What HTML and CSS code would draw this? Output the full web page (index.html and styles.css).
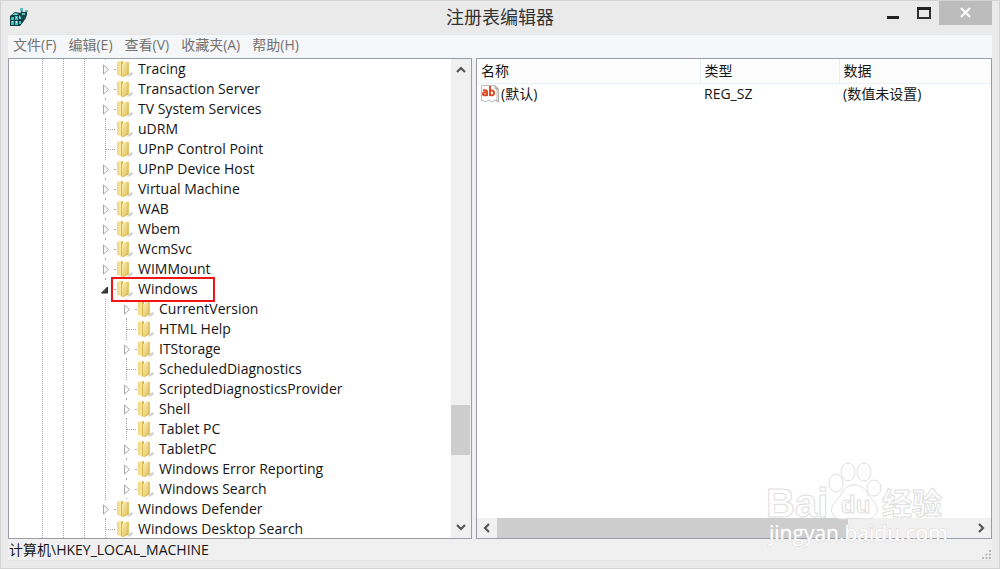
FILE: index.html
```html
<!DOCTYPE html>
<html lang="zh-CN">
<head>
<meta charset="utf-8">
<title>注册表编辑器</title>
<link rel="stylesheet" href="styles.css">
</head>
<body>
<svg class="defs" aria-hidden="true">
  <defs>
    <linearGradient id="gold" x1="0" x2="1" y1="0" y2="1"><stop offset="0" stop-color="#fbf0b8"/><stop offset="1" stop-color="#e0bb4e"/></linearGradient>
    <linearGradient id="pale" x1="0" x2="1"><stop offset="0" stop-color="#efd67e"/><stop offset="1" stop-color="#fbeaa6"/></linearGradient>
    <symbol id="folder" viewBox="0 0 18 18">
      <path d="M11 16.500l2-3 3-1.500 1 2-3 2.500z" fill="#c4c4c4" opacity=".75"/>
      <path d="M1 2l4-1v15.500l-4-2z" fill="url(#pale)"/>
      <path d="M5 1.500L7 1v5l-1 10.500H5z" fill="#d8b550"/>
      <path d="M6 4l2-.5V2l4-.5.8.8V14L7.500 17H6z" fill="url(#gold)"/>
      <path d="M12 2v12l-4.500 2.500" fill="none" stroke="#dcb953"/>
    </symbol>
    <symbol id="closed" viewBox="0 0 21 20">
      <path d="M10.500 0v1M10.500 19v1M19 10.500h2" stroke="#aaa"/>
      <path d="M8.500 6v9l5-4.500z" fill="#fff" stroke="#a6a6a6"/>
    </symbol>
    <symbol id="open" viewBox="0 0 21 20"><path d="M12.500 8v6h-6z" fill="#404040" stroke="#262626"/><path d="M10.500 0v1M19 10.500h2" stroke="#aaa"/></symbol>
    <symbol id="leaf" viewBox="0 0 21 20"><path d="M10.500 0v20M11 10.500h10" fill="none" stroke="#a0a0a0" stroke-dasharray="1 1"/></symbol>
    <symbol id="chevron" viewBox="0 0 12 12"><path d="M2 8l4-4 4 4" fill="none" stroke="#555" stroke-width="2.200"/></symbol>
  </defs>
</svg>
<div class="window">
  <header class="titlebar">
    <svg class="app-icon" viewBox="0 0 20 20" aria-hidden="true">
      <path d="M1 9l5-4 6 1 1 2 4-2-2 8-4 5H1z" fill="#123c40"/>
      <path d="M2 10h3v3H2zM6 9h3v4H6zM2 14h3v4H2zM6 14h3v4H6zM10 14h2v3h-2z" fill="#2fc6c8"/>
      <path d="M3 8l3-2 4 1-2 1zM10 9l2-1v4h-2z" fill="#59e0df"/>
      <path d="M12 4l3 1 3-1v4l-2 5-3-1-2-3z" fill="#17484c"/>
      <path d="M11 1h3v3h-3zM16 3h3v2h-3zM13 6h3v2h-3z" fill="#62b9bd"/>
      <path d="M3 14h1v1H3zM7 14h1v2H7zM7 10h1v1H7z" fill="#c8ffff"/>
    </svg>
    <h1 class="title">注册表编辑器</h1>
    <div class="controls">
      <button class="control" type="button" aria-label="最小化"><svg viewBox="0 0 16 16"><path d="M2 12.500h12" stroke="#222" stroke-width="3"/></svg></button>
      <button class="control" type="button" aria-label="最大化"><svg viewBox="0 0 16 16"><path d="M2 3h12v10H2z" fill="none" stroke="#303030" stroke-width="2"/><path d="M1 3.500h14" stroke="#222" stroke-width="3"/></svg></button>
      <button class="control close" type="button" aria-label="关闭"><svg viewBox="0 0 16 16"><path d="M3 3l9 9M12 3l-9 9" stroke="#fff" stroke-width="2"/></svg></button>
    </div>
  </header>
  <nav class="menu" aria-label="菜单">
    <button type="button">文件(F)</button><button type="button">编辑(E)</button><button type="button">查看(V)</button><button type="button">收藏夹(A)</button><button type="button">帮助(H)</button>
  </nav>
  <main class="panes">
    <section class="pane tree-pane" aria-label="注册表项">
      <ul class="tree">
        <li><div class="row"><button class="toggle" type="button" aria-label="展开 Tracing"><svg><use href="#closed"/></svg></button><svg class="folder"><use href="#folder"/></svg><span>Tracing</span></div></li>
        <li><div class="row"><button class="toggle" type="button" aria-label="展开 Transaction Server"><svg><use href="#closed"/></svg></button><svg class="folder"><use href="#folder"/></svg><span>Transaction Server</span></div></li>
        <li><div class="row"><button class="toggle" type="button" aria-label="展开 TV System Services"><svg><use href="#closed"/></svg></button><svg class="folder"><use href="#folder"/></svg><span>TV System Services</span></div></li>
        <li><div class="row"><svg class="toggle"><use href="#leaf"/></svg><svg class="folder"><use href="#folder"/></svg><span>uDRM</span></div></li>
        <li><div class="row"><svg class="toggle"><use href="#leaf"/></svg><svg class="folder"><use href="#folder"/></svg><span>UPnP Control Point</span></div></li>
        <li><div class="row"><button class="toggle" type="button" aria-label="展开 UPnP Device Host"><svg><use href="#closed"/></svg></button><svg class="folder"><use href="#folder"/></svg><span>UPnP Device Host</span></div></li>
        <li><div class="row"><button class="toggle" type="button" aria-label="展开 Virtual Machine"><svg><use href="#closed"/></svg></button><svg class="folder"><use href="#folder"/></svg><span>Virtual Machine</span></div></li>
        <li><div class="row"><button class="toggle" type="button" aria-label="展开 WAB"><svg><use href="#closed"/></svg></button><svg class="folder"><use href="#folder"/></svg><span>WAB</span></div></li>
        <li><div class="row"><button class="toggle" type="button" aria-label="展开 Wbem"><svg><use href="#closed"/></svg></button><svg class="folder"><use href="#folder"/></svg><span>Wbem</span></div></li>
        <li><div class="row"><button class="toggle" type="button" aria-label="展开 WcmSvc"><svg><use href="#closed"/></svg></button><svg class="folder"><use href="#folder"/></svg><span>WcmSvc</span></div></li>
        <li><div class="row"><button class="toggle" type="button" aria-label="展开 WIMMount"><svg><use href="#closed"/></svg></button><svg class="folder"><use href="#folder"/></svg><span>WIMMount</span></div></li>
        <li>
          <div class="row marked"><button class="toggle" type="button" aria-label="折叠 Windows" aria-expanded="true"><svg><use href="#open"/></svg></button><svg class="folder"><use href="#folder"/></svg><span>Windows</span></div>
          <ul class="branch">
            <li><div class="row"><button class="toggle" type="button" aria-label="展开 CurrentVersion"><svg><use href="#closed"/></svg></button><svg class="folder"><use href="#folder"/></svg><span>CurrentVersion</span></div></li>
            <li><div class="row"><svg class="toggle"><use href="#leaf"/></svg><svg class="folder"><use href="#folder"/></svg><span>HTML Help</span></div></li>
            <li><div class="row"><button class="toggle" type="button" aria-label="展开 ITStorage"><svg><use href="#closed"/></svg></button><svg class="folder"><use href="#folder"/></svg><span>ITStorage</span></div></li>
            <li><div class="row"><svg class="toggle"><use href="#leaf"/></svg><svg class="folder"><use href="#folder"/></svg><span>ScheduledDiagnostics</span></div></li>
            <li><div class="row"><button class="toggle" type="button" aria-label="展开 ScriptedDiagnosticsProvider"><svg><use href="#closed"/></svg></button><svg class="folder"><use href="#folder"/></svg><span>ScriptedDiagnosticsProvider</span></div></li>
            <li><div class="row"><button class="toggle" type="button" aria-label="展开 Shell"><svg><use href="#closed"/></svg></button><svg class="folder"><use href="#folder"/></svg><span>Shell</span></div></li>
            <li><div class="row"><svg class="toggle"><use href="#leaf"/></svg><svg class="folder"><use href="#folder"/></svg><span>Tablet PC</span></div></li>
            <li><div class="row"><button class="toggle" type="button" aria-label="展开 TabletPC"><svg><use href="#closed"/></svg></button><svg class="folder"><use href="#folder"/></svg><span>TabletPC</span></div></li>
            <li><div class="row"><button class="toggle" type="button" aria-label="展开 Windows Error Reporting"><svg><use href="#closed"/></svg></button><svg class="folder"><use href="#folder"/></svg><span>Windows Error Reporting</span></div></li>
            <li><div class="row"><button class="toggle" type="button" aria-label="展开 Windows Search"><svg><use href="#closed"/></svg></button><svg class="folder"><use href="#folder"/></svg><span>Windows Search</span></div></li>
          </ul>
        </li>
        <li><div class="row"><button class="toggle" type="button" aria-label="展开 Windows Defender"><svg><use href="#closed"/></svg></button><svg class="folder"><use href="#folder"/></svg><span>Windows Defender</span></div></li>
        <li><div class="row"><svg class="toggle"><use href="#leaf"/></svg><svg class="folder"><use href="#folder"/></svg><span>Windows Desktop Search</span></div></li>
      </ul>
      <div class="scroll vertical">
        <button type="button" aria-label="向上滚动"><svg><use href="#chevron"/></svg></button>
        <div class="track"><div class="thumb"></div></div>
        <button type="button" aria-label="向下滚动"><svg class="down"><use href="#chevron"/></svg></button>
      </div>
    </section>
    <section class="pane value-pane" aria-label="值">
      <table class="values">
        <thead><tr><th class="name" scope="col">名称</th><th class="type" scope="col">类型</th><th scope="col">数据</th></tr></thead>
        <tbody><tr>
          <td><div class="value-name"><svg class="string-icon" viewBox="0 0 20 20" aria-hidden="true"><path d="M1.500 1.500H15l3 3V18l-3-2-3 2-3-2-3 1.500-4.500-1z" fill="#fff" stroke="#bbb"/><path d="M15 1.500l3 3h-3zM16 5l2.500 1v12L16 16" fill="#ddd" stroke="#aaa"/><g fill="none" stroke="#df4b25" stroke-width="2"><path d="M3 6.200h2.500q1.500 0 1.500 1.500V12M7 8.500H4.500Q3 8.500 3 10t1.500 1.200H7"/><path d="M10 2v10M10 6.500h2q2 0 2 2.400T12 11.200h-2"/></g></svg><span>(默认)</span></div></td>
          <td>REG_SZ</td><td>(数值未设置)</td>
        </tr></tbody>
      </table>
      <div class="scroll horizontal">
        <button type="button" aria-label="向左滚动"><svg class="left"><use href="#chevron"/></svg></button>
        <div class="track"><div class="thumb"></div></div>
        <button type="button" aria-label="向右滚动"><svg class="right"><use href="#chevron"/></svg></button>
      </div>
    </section>
  </main>
  <footer class="status"><span>计算机\HKEY_LOCAL_MACHINE</span>
    <svg class="grip" viewBox="0 0 10 10" aria-hidden="true"><path d="M7 0h2v2H7zM7 3.500h2v2H7zM7 7h2v2H7zM3.500 3.500h2v2h-2zM3.500 7h2v2h-2zM0 7h2v2H0z" fill="#b5b5b5"/></svg>
  </footer>
  <svg class="watermark" viewBox="0 0 190 90">
    <g class="outline">
      <text class="brand" x="3" y="57">Bai</text>
      <ellipse cx="73" cy="23" rx="7" ry="9"/>
      <ellipse cx="85" cy="12" rx="7" ry="9"/>
      <ellipse cx="101" cy="12" rx="7" ry="9"/>
      <ellipse cx="111" cy="28" rx="7" ry="8"/>
      <path d="M80 31c5-8 18-8 23 0 2 4 5 7 8 11 7 8 2 18-10 17-7-1-13-1-20 0-12 1-16-9-9-17 4-4 6-7 8-11z"/>
      <text class="du" x="78" y="53">du</text>
      <text class="cn" x="119" y="54">经验</text>
    </g>
    <text class="site" x="6" y="81">jingyan.baidu.com</text>
  </svg>
</div>
</body>
</html>
```
FILE: styles.css
```css
*, *::after { box-sizing: border-box; }
body { margin: 0; background: #eaeaea; color: #151515; font: 14px/20px "Open Sans", "Noto Sans CJK SC", sans-serif; }
button { margin: 0; padding: 0; border: 0; background: none; color: inherit; font: inherit; }
ul { margin: 0; padding: 0; list-style: none; }
.defs { position: absolute; width: 0; height: 0; }
.window { position: relative; display: flex; flex-direction: column; height: 100vh; padding: 0 7px 7px; border: 1px solid #d3d3d3; }
.titlebar { display: grid; grid-template-columns: 1fr auto 1fr; align-items: start; height: 33px; }
.app-icon { width: 20px; height: 20px; margin: 6px 0 0 1px; }
.title { margin: 4px 0 0; font-size: 18px; line-height: 24px; font-weight: 400; color: #333; }
.controls { display: flex; justify-content: flex-end; }
.control { display: flex; align-items: center; justify-content: center; width: 31px; height: 24px; }
.control svg { width: 16px; height: 16px; }
.close { width: 53px; background: #bcbcbc; }
.menu { display: flex; align-items: flex-start; gap: 12px; height: 24px; padding: 0 5px; background: #f5f6f7; border-top: 1px solid #e3e5e7; color: #737373; }
.panes { display: grid; grid-template-columns: 464fr 516fr; gap: 4px; flex: 1; min-height: 0; background: #f0f0f0; }
.pane { display: flex; min-width: 0; min-height: 0; border: 1px solid #9a9da6; background: #fff; overflow: hidden; }
.tree { flex: 1; padding-left: 86px; background-image: repeating-linear-gradient(#a3a3a3 0 1px, #fff 1px 2px), repeating-linear-gradient(#a3a3a3 0 1px, #fff 1px 2px), repeating-linear-gradient(#a3a3a3 0 1px, #fff 1px 2px); background-repeat: no-repeat; background-size: 1px 100%; background-position: 33px 0, 54px 0, 75px 0; }
.row { display: flex; align-items: center; height: 20px; white-space: nowrap; }
.toggle, .toggle svg { display: block; flex: none; width: 21px; height: 20px; }
.folder { flex: none; width: 18px; height: 18px; margin-right: 4px; }
.branch { padding-left: 21px; background: repeating-linear-gradient(#a3a3a3 0 1px, #fff 1px 2px) 10px 0 / 1px 100% no-repeat; }
.marked { position: relative; }
.marked::after { content: ""; position: absolute; top: -2px; left: 16px; width: 104px; height: 25px; border: 2px solid #f01414; }
.scroll { display: flex; flex: none; background: #f0f0f0; }
.scroll button { display: flex; align-items: center; justify-content: center; width: 20px; height: 22px; }
.scroll svg { width: 12px; height: 12px; }
.scroll .track { display: flex; flex: 1; }
.thumb { background: #cdcdcd; }
.vertical { flex-direction: column; width: 20px; }
.vertical .track { padding-top: 324px; }
.vertical .thumb { width: 19px; height: 50px; }
.horizontal button { height: 20px; }
.horizontal .thumb { width: 74%; }
.down { transform: rotate(180deg); }
.left { transform: rotate(-90deg); }
.right { transform: rotate(90deg); }
.value-pane { flex-direction: column; justify-content: space-between; }
.values { width: 100%; table-layout: fixed; border-collapse: collapse; }
.values th { height: 24px; padding: 1px 4px; border-right: 1px solid #e6eff7; border-bottom: 1px solid #eaf1f7; background: #fcfcfc; text-align: left; font-weight: 400; }
.values th:last-child { border-right: 0; }
.values .name { width: 223px; }
.values .type { width: 139px; }
.values td { height: 22px; padding: 0 4px; }
.values td:first-child { padding-left: 3px; }
.value-name { display: flex; align-items: center; gap: 1px; }
.string-icon { width: 20px; height: 20px; }
.status { display: flex; justify-content: space-between; align-items: flex-end; height: 22px; padding: 0 0 0 1px; background: #f0f0f0; border-bottom: 1px solid #e2e2e2; }
.grip { width: 10px; height: 10px; }
.watermark { position: absolute; right: 46px; bottom: 18px; width: 190px; height: 90px; pointer-events: none; }
.outline { fill: #fff; stroke: #dedede; stroke-width: 1; }
.brand { font: 700 40px "Liberation Sans", sans-serif; }
.du { font: 700 24px "Liberation Sans", sans-serif; }
.cn { font: 700 30px "Noto Sans CJK SC", sans-serif; }
.site { fill: #fff; stroke: #d9d9d9; stroke-width: 1; paint-order: stroke; font: 21px "Open Sans", sans-serif; }
```
